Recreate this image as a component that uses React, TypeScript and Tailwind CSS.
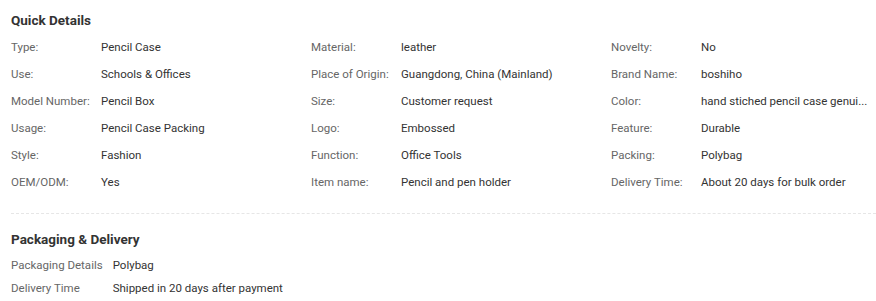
import React from 'react';

type Attr = { label: string; value: string };

const quickDetails: Attr[][] = [
  [
    { label: 'Type:', value: 'Pencil Case' },
    { label: 'Use:', value: 'Schools & Offices' },
    { label: 'Model Number:', value: 'Pencil Box' },
    { label: 'Usage:', value: 'Pencil Case Packing' },
    { label: 'Style:', value: 'Fashion' },
    { label: 'OEM/ODM:', value: 'Yes' },
  ],
  [
    { label: 'Material:', value: 'leather' },
    { label: 'Place of Origin:', value: 'Guangdong, China (Mainland)' },
    { label: 'Size:', value: 'Customer request' },
    { label: 'Logo:', value: 'Embossed' },
    { label: 'Function:', value: 'Office Tools' },
    { label: 'Item name:', value: 'Pencil and pen holder' },
  ],
  [
    { label: 'Novelty:', value: 'No' },
    { label: 'Brand Name:', value: 'boshiho' },
    { label: 'Color:', value: 'hand stiched pencil case genui...' },
    { label: 'Feature:', value: 'Durable' },
    { label: 'Packing:', value: 'Polybag' },
    { label: 'Delivery Time:', value: 'About 20 days for bulk order' },
  ],
];

const packaging: Attr[] = [
  { label: 'Packaging Details', value: 'Polybag' },
  { label: 'Delivery Time', value: 'Shipped in 20 days after payment' },
];

const DetailColumn = ({ items }: { items: Attr[] }) => (
  <div className="w-[300px] shrink-0">
    {items.map((it) => (
      <div key={it.label} className="flex h-[27px] items-center">
        <span className="w-[90px] shrink-0 text-[#666]">{it.label}</span>
        <span className="whitespace-nowrap text-[#333]">{it.value}</span>
      </div>
    ))}
  </div>
);

export default function App() {
  return (
    <div
      className="w-[876px] overflow-hidden bg-white pl-[11px] pt-[10px] text-[11.5px]"
      style={{ fontFamily: 'Roboto, "Liberation Sans", sans-serif' }}
    >
      <h3 className="text-[13.5px] leading-[20px] font-bold text-[#333]">Quick Details</h3>
      <div className="mt-[4px] flex">
        {quickDetails.map((col, i) => (
          <DetailColumn key={i} items={col} />
        ))}
      </div>

      <div className="mt-[17px] border-t border-dashed border-[#e6e6e6]" />

      <h3 className="mt-[15px] text-[13.5px] leading-[20px] font-bold text-[#333]">Packaging &amp; Delivery</h3>
      <table className="mt-[5px] border-collapse">
        <tbody>
          {packaging.map((it) => (
            <tr key={it.label} className="h-[23px]">
              <td className="pr-[10px] text-[#666]">{it.label}</td>
              <td className="text-[#333]">{it.value}</td>
            </tr>
          ))}
        </tbody>
      </table>
    </div>
  );
}
